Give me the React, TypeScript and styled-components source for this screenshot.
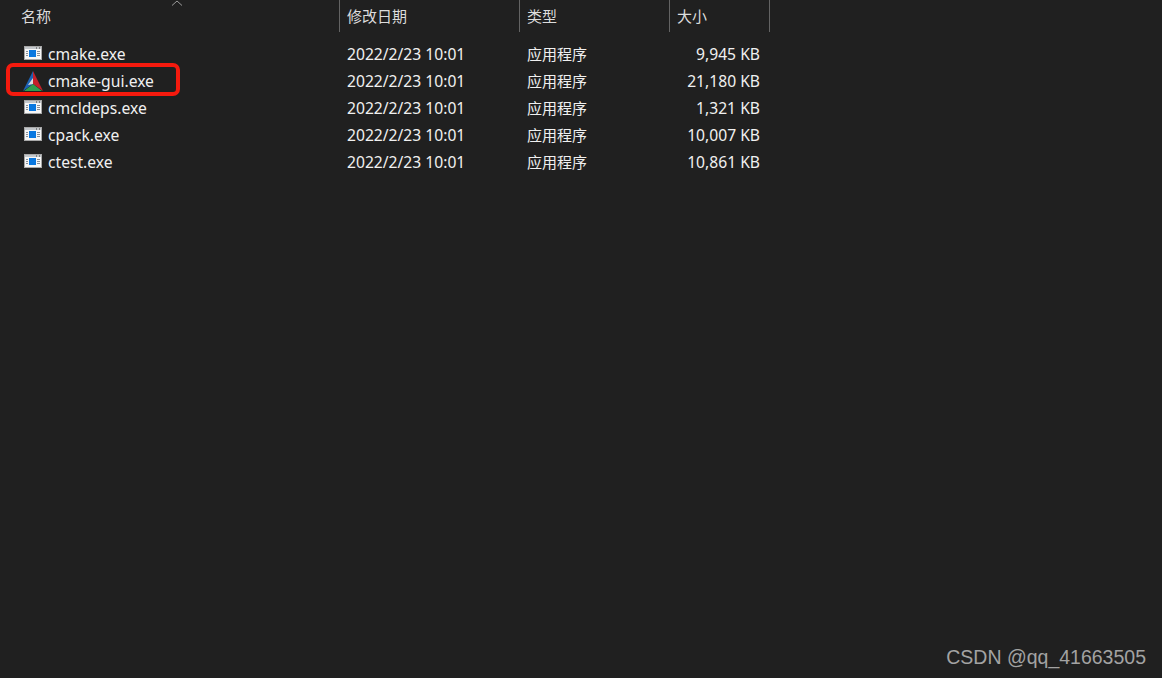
import styled, { createGlobalStyle } from 'styled-components';

const GlobalStyle = createGlobalStyle`
  html, body {
    margin: 0;
    padding: 0;
    background: #202020;
  }
`;

const Window = styled.div`
  position: relative;
  width: 1162px;
  height: 678px;
  overflow: hidden;
  background: #202020;
  color: #f0f0f0;
  font-family: 'Noto Sans', 'Noto Sans CJK SC', sans-serif;
  font-size: 15.65px;
`;

const Columns = styled.div`
  display: grid;
  grid-template-columns: 340px 180px 150px 100px;
  width: 770px;
`;

const Header = styled(Columns)`
  height: 32px;
  margin-bottom: 8px;
`;

const HeaderCell = styled.div<{ $first?: boolean }>`
  position: relative;
  display: flex;
  align-items: center;
  height: 32px;
  padding: 0 0 2px ${({ $first }) => ($first ? '21px' : '7px')};
  border-right: 1px solid #636363;
  box-sizing: border-box;
  color: #dcdcdc;
  font-family: 'Noto Sans CJK SC', sans-serif;
  font-size: 15px;
`;

const SortArrow = styled.svg`
  position: absolute;
  left: 171px;
  top: 0;
`;

const Row = styled(Columns)`
  height: 27px;
  align-items: center;
`;

const NameCell = styled.div`
  position: relative;
  display: flex;
  align-items: center;
  align-self: stretch;
  padding-left: 23px;
`;

const IconSlot = styled.div`
  display: flex;
  justify-content: center;
  width: 20px;
  margin-right: 5px;
`;

const Cell = styled.div`
  padding-left: 7px;
  white-space: nowrap;
`;

const CjkCell = styled(Cell)`
  font-family: 'Noto Sans CJK SC', sans-serif;
  font-size: 15px;
`;

const SizeCell = styled(Cell)`
  padding: 0 10px 0 0;
  text-align: right;
`;

const Highlight = styled.div`
  position: absolute;
  left: 6px;
  top: -4px;
  width: 174px;
  height: 33px;
  box-sizing: border-box;
  border: 4px solid #f51a0e;
  border-radius: 7px;
`;

const Watermark = styled.div`
  position: absolute;
  right: 16px;
  bottom: 9px;
  color: #a3a3a3;
  font-family: 'Liberation Sans', sans-serif;
  font-size: 19.5px;
`;

const ExeIcon = () => (
  <svg width="18" height="16" viewBox="0 0 18 16">
    <rect x="0" y="0" width="18" height="14" fill="#a8a8a8" />
    <rect x="1" y="1" width="16" height="12" fill="#f7f7f7" />
    <rect x="1" y="1" width="16" height="2" fill="#c4c8cc" />
    <rect x="12" y="1" width="1" height="2" fill="#808080" />
    <rect x="15" y="1" width="1" height="2" fill="#808080" />
    <rect x="5" y="4" width="7" height="7" fill="#0a78e0" />
    <rect x="2" y="5" width="2" height="1" fill="#8a8f96" />
    <rect x="2" y="7" width="2" height="1" fill="#8a8f96" />
    <rect x="2" y="9" width="2" height="1" fill="#8a8f96" />
    <rect x="13" y="5" width="3" height="1" fill="#8a8f96" />
    <rect x="13" y="7" width="3" height="1" fill="#8a8f96" />
    <rect x="13" y="9" width="3" height="1" fill="#8a8f96" />
  </svg>
);

const CmakeIcon = () => (
  <svg width="20" height="20" viewBox="0 0 20 20">
    <polygon points="10,0 0,20 10,13" fill="#1c62b4" />
    <polygon points="10,0 20,20 10,13" fill="#c4202a" />
    <polygon points="1,20 10,13 19,20" fill="#2f9e4f" />
    <polygon points="10,7 10,13 5,14" fill="#dcdcdc" />
  </svg>
);

const files = [
  { name: 'cmake.exe', size: '9,945 KB' },
  { name: 'cmake-gui.exe', size: '21,180 KB', marked: true },
  { name: 'cmcldeps.exe', size: '1,321 KB' },
  { name: 'cpack.exe', size: '10,007 KB' },
  { name: 'ctest.exe', size: '10,861 KB' },
];

const App = () => {
  return (
    <Window>
      <GlobalStyle />
      <Header>
        <HeaderCell $first>
          名称
          <SortArrow width="12" height="7" viewBox="0 0 12 7">
            <path d="M1 5.5 L6 1 L11 5.5" fill="none" stroke="#9a9a9a" strokeWidth="1" />
          </SortArrow>
        </HeaderCell>
        <HeaderCell>修改日期</HeaderCell>
        <HeaderCell>类型</HeaderCell>
        <HeaderCell>大小</HeaderCell>
      </Header>
      {files.map((file) => (
        <Row key={file.name}>
          <NameCell>
            {file.marked && <Highlight />}
            <IconSlot>{file.marked ? <CmakeIcon /> : <ExeIcon />}</IconSlot>
            {file.name}
          </NameCell>
          <Cell>2022/2/23 10:01</Cell>
          <CjkCell>应用程序</CjkCell>
          <SizeCell>{file.size}</SizeCell>
        </Row>
      ))}
      <Watermark>CSDN @qq_41663505</Watermark>
    </Window>
  );
};

export default App;
